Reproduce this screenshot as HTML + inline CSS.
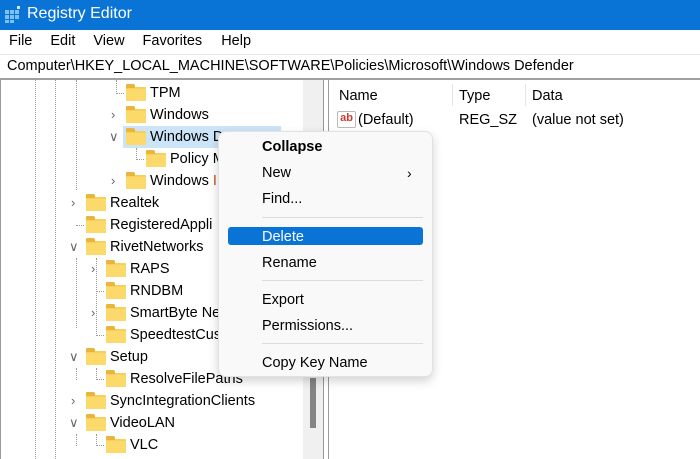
<!DOCTYPE html>
<html><head><style>
*{margin:0;padding:0;box-sizing:border-box}
body{width:700px;height:459px;overflow:hidden;background:#fff;font-family:"Liberation Sans",sans-serif;color:#000;position:relative}
.a{position:absolute;white-space:nowrap}
.t{font-size:14.5px;line-height:22px}
.f{position:absolute;width:20px;height:14px;background:#f8cf5a;border-radius:1px}
.f:before{content:"";position:absolute;left:0;top:-3px;width:9px;height:4px;background:#eab53c;border-radius:1px 2px 0 0}
.f:after{content:"";position:absolute;left:0;top:2px;width:20px;height:12px;background:#fbd96b}
.ch{position:absolute;font-size:13px;color:#666;line-height:22px}
.vl{position:absolute;border-left:1px dotted #999;width:0}
.hl{position:absolute;border-top:1px dotted #999;height:0}
.m{position:absolute;left:262px;font-size:14.5px;line-height:20px}
.sep{position:absolute;left:262px;width:161px;border-top:1px solid #ddd}
</style></head><body>
<div class="a" style="left:0;top:0;width:700px;height:30px;background:#0a74d6"></div>
<svg class="a" style="left:4px;top:6px" width="18" height="18"><g fill="#7fc0f0"><rect x="1" y="4" width="4" height="4"/><rect x="6" y="4" width="4" height="4"/><rect x="11" y="4" width="4" height="4"/><rect x="1" y="9" width="4" height="4"/><rect x="6" y="9" width="4" height="4"/><rect x="11" y="9" width="4" height="4"/><rect x="1" y="14" width="4" height="3"/><rect x="6" y="14" width="4" height="3"/></g><rect x="13" y="0" width="3" height="3" fill="#cfe8fa"/></svg>
<div class="a" style="left:27px;top:5px;font-size:16px;color:#fff">Registry Editor</div>
<div class="a" style="left:0;top:30px;width:700px;height:24px;background:#fff"></div>
<div class="a" style="left:9px;top:33px;font-size:14.5px;word-spacing:0"><span>File</span><span style="margin-left:18px">Edit</span><span style="margin-left:18px">View</span><span style="margin-left:18px">Favorites</span><span style="margin-left:19px">Help</span></div>
<div class="a" style="left:0;top:54px;width:700px;height:26px;background:#fff;border-top:1px solid #e8e8e8;border-bottom:2px solid #a0a0a0"></div>
<div class="a" style="left:7px;top:58px;font-size:14.5px">Computer\HKEY_LOCAL_MACHINE\SOFTWARE\Policies\Microsoft\Windows Defender</div>
<div class="a" style="left:0;top:80px;width:1px;height:379px;background:#999"></div>
<div class="a" style="left:303px;top:80px;width:20px;height:379px;background:#f0f0f0"></div>
<div class="a" style="left:310px;top:378px;width:6px;height:50px;background:#858585"></div>
<div class="a" style="left:323px;top:80px;width:1px;height:379px;background:#999"></div>
<div class="a" style="left:328px;top:80px;width:1px;height:379px;background:#999"></div>
<div class="vl" style="left:35px;top:80px;height:379px"></div>
<div class="vl" style="left:55px;top:80px;height:379px"></div>
<div class="vl" style="left:76px;top:80px;height:110px"></div>
<div class="vl" style="left:76px;top:258px;height:70px"></div>
<div class="vl" style="left:76px;top:368px;height:12px"></div>
<div class="vl" style="left:76px;top:434px;height:12px"></div>
<div class="vl" style="left:116px;top:80px;height:14px"></div>
<div class="hl" style="left:116px;top:93px;width:8px"></div>
<div class="vl" style="left:136px;top:148px;height:12px"></div>
<div class="hl" style="left:136px;top:159px;width:8px"></div>
<div class="hl" style="left:76px;top:225px;width:8px"></div>
<div class="hl" style="left:96px;top:291px;width:8px"></div>
<div class="hl" style="left:96px;top:335px;width:8px"></div>
<div class="hl" style="left:96px;top:379px;width:8px"></div>
<div class="hl" style="left:96px;top:445px;width:8px"></div>
<div class="vl" style="left:96px;top:258px;height:78px"></div>
<div class="vl" style="left:96px;top:368px;height:12px"></div>
<div class="vl" style="left:96px;top:434px;height:12px"></div>
<div class="a" style="left:123px;top:126px;width:158px;height:22px;background:#cce4f7"></div>
<div class="f" style="left:126px;top:87px"></div><div class="a t" style="left:150px;top:82px">TPM</div>
<div class="ch" style="left:111px;top:104px">&#x203A;</div><div class="f" style="left:126px;top:109px"></div><div class="a t" style="left:150px;top:104px">Windows</div>
<div class="ch" style="left:109px;top:126px">&#x2228;</div><div class="f" style="left:126px;top:131px"></div><div class="a t" style="left:150px;top:126px">Windows D</div>
<div class="f" style="left:146px;top:153px"></div><div class="a t" style="left:170px;top:148px">Policy M</div>
<div class="ch" style="left:111px;top:170px">&#x203A;</div><div class="f" style="left:126px;top:175px"></div><div class="a t" style="left:150px;top:170px">Windows <span style="color:#c05020">I</span></div>
<div class="ch" style="left:71px;top:192px">&#x203A;</div><div class="f" style="left:86px;top:197px"></div><div class="a t" style="left:110px;top:192px">Realtek</div>
<div class="f" style="left:86px;top:219px"></div><div class="a t" style="left:110px;top:214px">RegisteredAppli</div>
<div class="ch" style="left:69px;top:236px">&#x2228;</div><div class="f" style="left:86px;top:241px"></div><div class="a t" style="left:110px;top:236px">RivetNetworks</div>
<div class="ch" style="left:91px;top:258px">&#x203A;</div><div class="f" style="left:106px;top:263px"></div><div class="a t" style="left:130px;top:258px">RAPS</div>
<div class="f" style="left:106px;top:285px"></div><div class="a t" style="left:130px;top:280px">RNDBM</div>
<div class="ch" style="left:91px;top:302px">&#x203A;</div><div class="f" style="left:106px;top:307px"></div><div class="a t" style="left:130px;top:302px">SmartByte Ne</div>
<div class="f" style="left:106px;top:329px"></div><div class="a t" style="left:130px;top:324px">SpeedtestCus</div>
<div class="ch" style="left:69px;top:346px">&#x2228;</div><div class="f" style="left:86px;top:351px"></div><div class="a t" style="left:110px;top:346px">Setup</div>
<div class="f" style="left:106px;top:373px"></div><div class="a t" style="left:130px;top:368px">ResolveFilePaths</div>
<div class="ch" style="left:71px;top:390px">&#x203A;</div><div class="f" style="left:86px;top:395px"></div><div class="a t" style="left:110px;top:390px">SyncIntegrationClients</div>
<div class="ch" style="left:69px;top:412px">&#x2228;</div><div class="f" style="left:86px;top:417px"></div><div class="a t" style="left:110px;top:412px">VideoLAN</div>
<div class="f" style="left:106px;top:439px"></div><div class="a t" style="left:130px;top:434px">VLC</div>
<div class="a t" style="left:339px;top:85px">Name</div>
<div class="a" style="left:452px;top:84px;width:1px;height:22px;background:#e5e5e5"></div>
<div class="a t" style="left:459px;top:85px">Type</div>
<div class="a" style="left:525px;top:84px;width:1px;height:22px;background:#e5e5e5"></div>
<div class="a t" style="left:532px;top:85px">Data</div>
<div class="a" style="left:337px;top:111px;width:19px;height:17px;border:1px solid #bbb;border-radius:2px;background:#fff;font-size:11px;font-weight:bold;color:#d03a2a;line-height:13px;text-align:center">ab</div>
<div class="a t" style="left:358px;top:109px">(Default)</div>
<div class="a t" style="left:459px;top:109px">REG_SZ</div>
<div class="a t" style="left:532px;top:109px">(value not set)</div>
<div class="a" style="left:218px;top:131px;width:215px;height:246px;background:#f9f9f9;border:1px solid #e2e2e2;border-radius:8px;box-shadow:0 4px 10px rgba(0,0,0,.18)"></div>
<div class="m" style="top:137px;font-weight:bold">Collapse</div>
<div class="m" style="top:163px">New</div><div class="a" style="left:407px;top:163px;font-size:14px;line-height:20px">&#x203A;</div>
<div class="m" style="top:189px">Find...</div>
<div class="sep" style="top:217px"></div>
<div class="a" style="left:228px;top:227px;width:195px;height:18px;background:#0a74d6;border-radius:3px"></div>
<div class="m" style="top:227px;color:#fff">Delete</div>
<div class="m" style="top:253px">Rename</div>
<div class="sep" style="top:280px"></div>
<div class="m" style="top:290px">Export</div>
<div class="m" style="top:316px">Permissions...</div>
<div class="sep" style="top:343px"></div>
<div class="m" style="top:353px">Copy Key Name</div>
</body></html>
